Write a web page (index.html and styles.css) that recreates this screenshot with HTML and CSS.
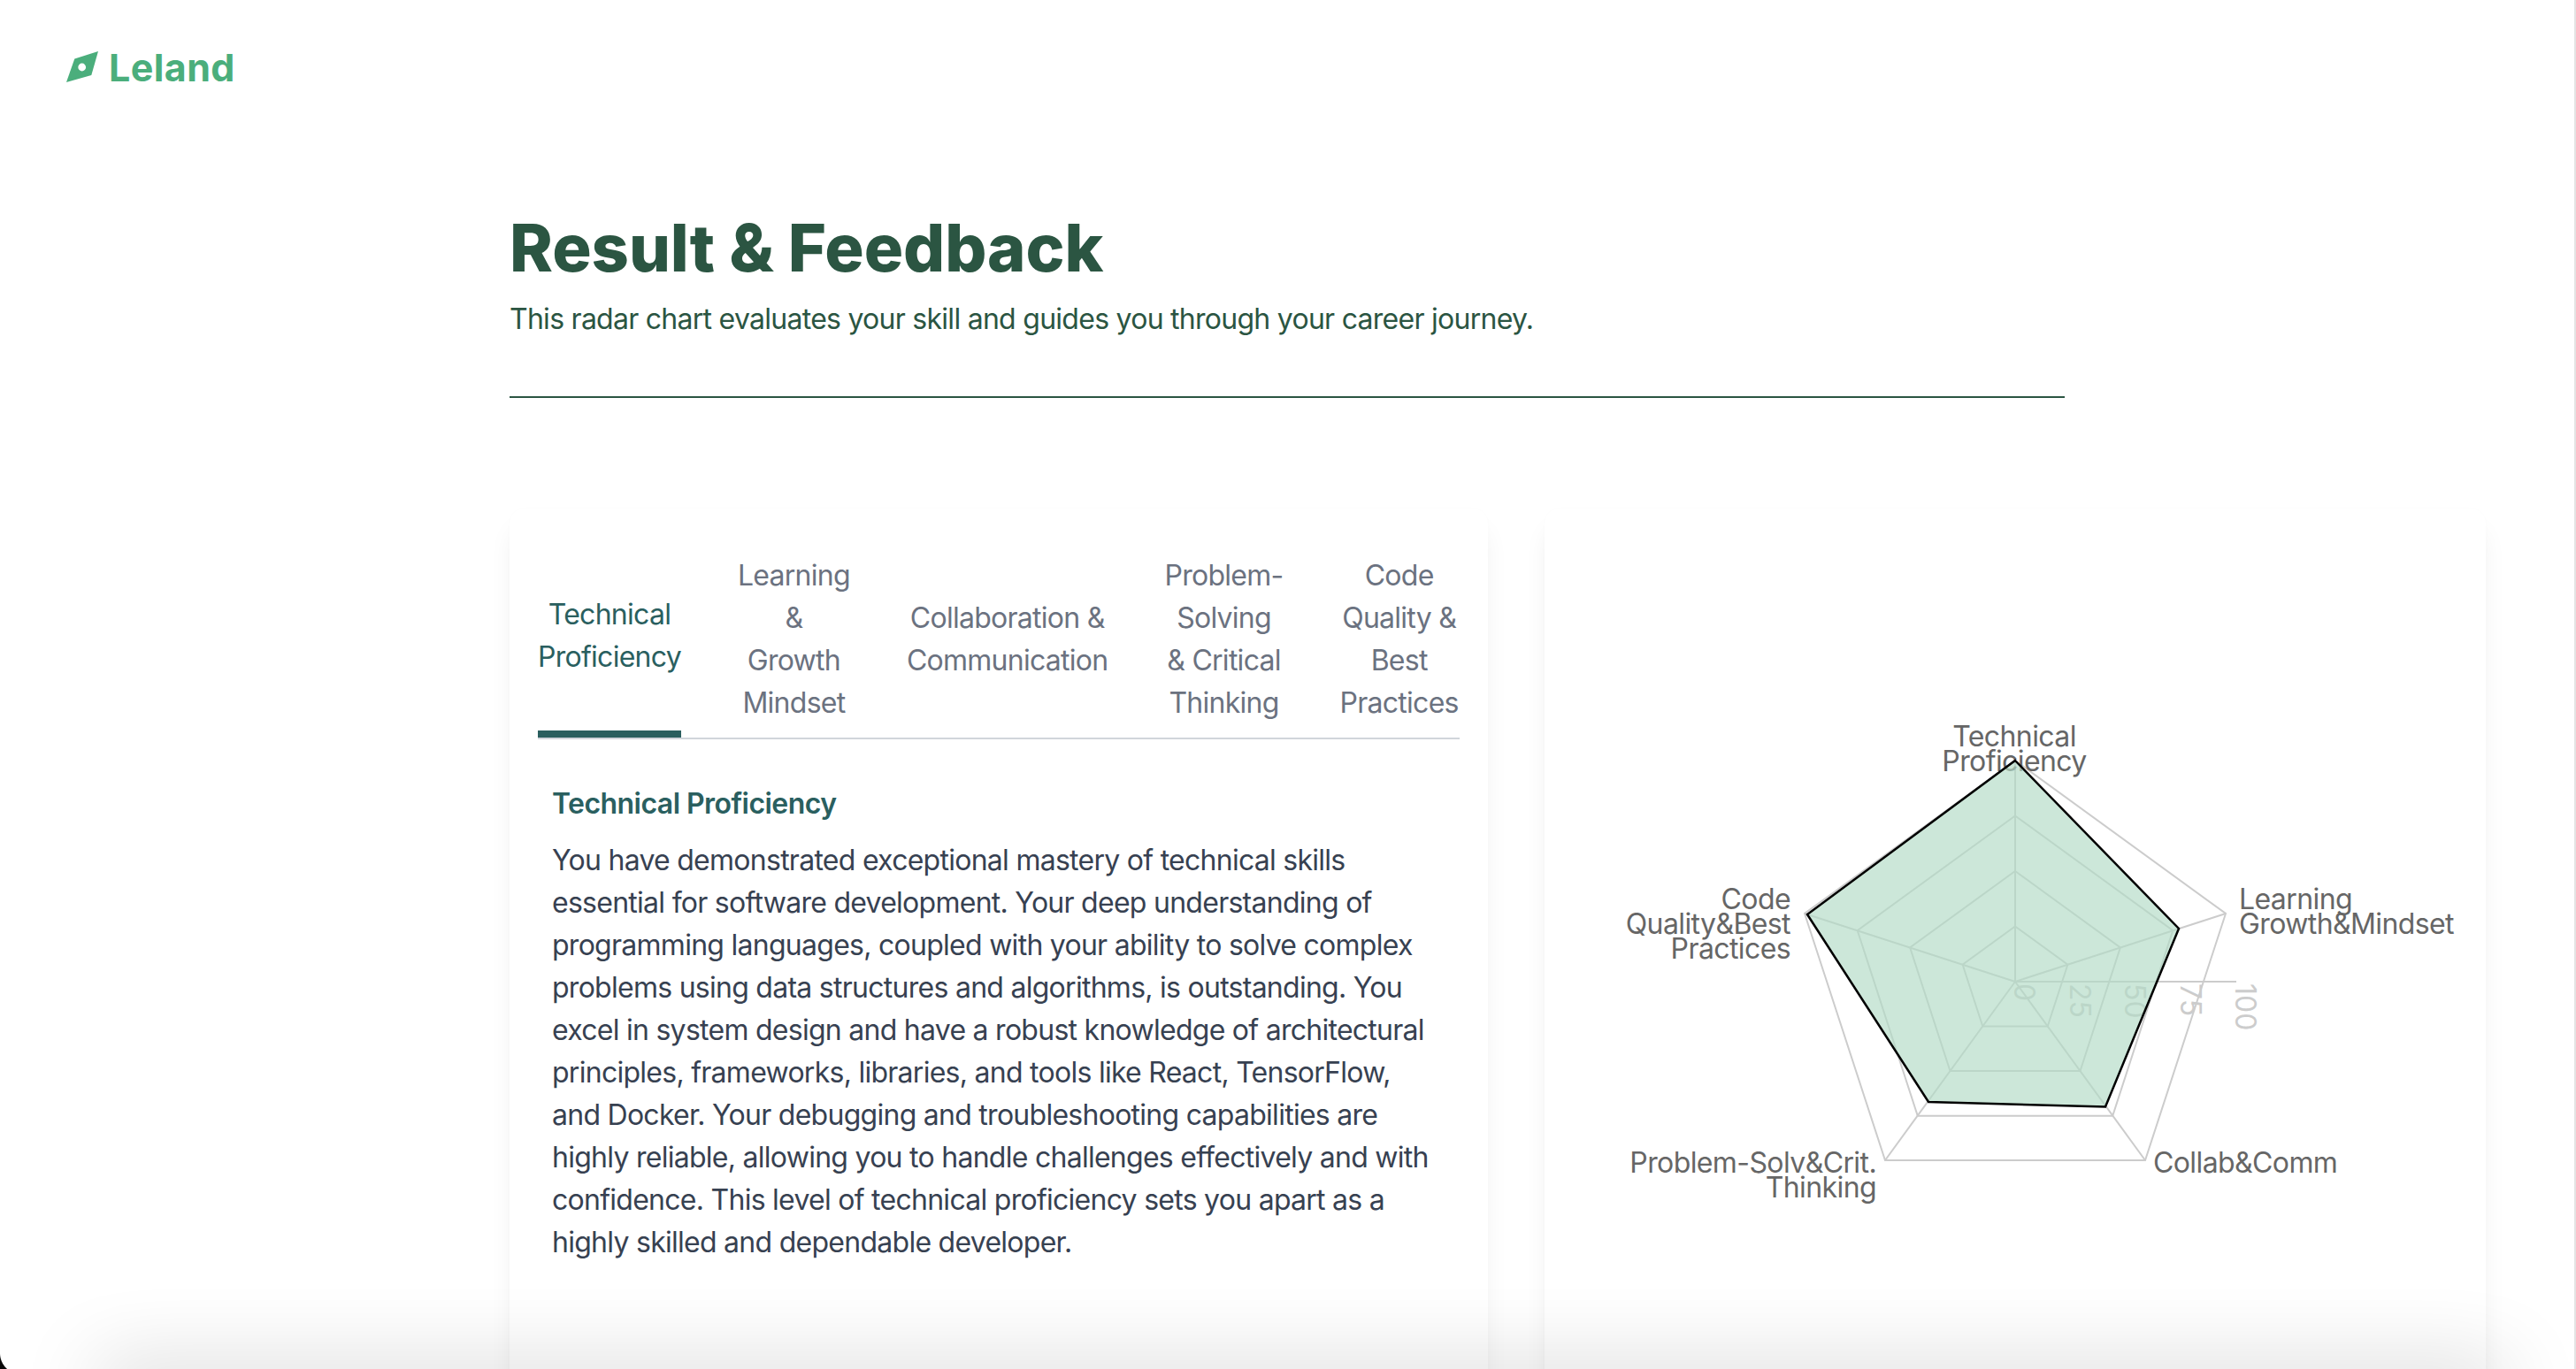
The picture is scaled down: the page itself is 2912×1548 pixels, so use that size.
FILE: index.html
```html
<!DOCTYPE html>
<html lang="en">
<head>
    <meta charset="UTF-8">
    <title>Result &amp; Feedback</title>
    <link rel="stylesheet" href="styles.css">
</head>
<body>
    <header class="topbar">
        <svg class="logo-mark" viewBox="0 0 36 36">
            <path d="M36 0 9.3 8.5 0 35l28.3-8z" fill="#4bae7c"/>
            <circle cx="17.7" cy="18" r="4.4" fill="#fff"/>
        </svg>
        <span class="logo-text">Leland</span>
    </header>

    <main class="content">
        <section class="intro">
            <h1>Result &amp; Feedback</h1>
            <p>This radar chart evaluates your skill and guides you through your career journey.</p>
        </section>

        <section class="cards">
            <div class="card">
                <div class="tabs">
                    <div class="tab active">Technical<br>Proficiency</div>
                    <div class="tab">Learning<br>&amp;<br>Growth<br>Mindset</div>
                    <div class="tab">Collaboration &amp;<br>Communication</div>
                    <div class="tab">Problem-<br>Solving<br>&amp; Critical<br>Thinking</div>
                    <div class="tab">Code<br>Quality &amp;<br>Best<br>Practices</div>
                </div>
                <div class="panel">
                    <h3>Technical Proficiency</h3>
                    <p>You have demonstrated exceptional mastery of technical skills essential for software development. Your deep understanding of programming languages, coupled with your ability to solve complex problems using data structures and algorithms, is outstanding. You excel in system design and have a robust knowledge of architectural principles, frameworks, libraries, and tools like React, TensorFlow, and Docker. Your debugging and troubleshooting capabilities are highly reliable, allowing you to handle challenges effectively and with confidence. This level of technical proficiency sets you apart as a highly skilled and dependable developer.</p>
                </div>
            </div>

            <div class="card chart-card">
                <svg class="radar" viewBox="0 0 1064 973">
                    <g class="grid">
                        <polygon points="532,472.5 591.4,515.7 568.7,585.6 495.3,585.6 472.6,515.7"/>
                        <polygon points="532,410 650.9,496.4 605.5,636.1 458.5,636.1 413.1,496.4"/>
                        <polygon points="532,347.5 710.3,477.1 642.2,686.7 421.8,686.7 353.7,477.1"/>
                        <polygon points="532,285 770,458 679,737 385,737 294,458"/>
                        <line x1="532" y1="535" x2="532" y2="285"/>
                        <line x1="532" y1="535" x2="770" y2="458"/>
                        <line x1="532" y1="535" x2="679" y2="737"/>
                        <line x1="532" y1="535" x2="385" y2="737"/>
                        <line x1="532" y1="535" x2="294" y2="458"/>
                        <line x1="532" y1="535" x2="782" y2="535"/>
                    </g>
                    <g class="ticks">
                        <text transform="rotate(90 531 537)" x="531" y="537">0</text>
                        <text transform="rotate(90 593.5 537)" x="593.5" y="537">25</text>
                        <text transform="rotate(90 656 537)" x="656" y="537">50</text>
                        <text transform="rotate(90 718.5 537)" x="718.5" y="537">75</text>
                        <text transform="rotate(90 781 537)" x="781" y="537">100</text>
                    </g>
                    <g class="labels">
                        <text x="531" y="268.5" text-anchor="middle">Technical</text>
                        <text x="531" y="296.5" text-anchor="middle">Proficiency</text>
                        <text x="785" y="453">Learning</text>
                        <text x="785" y="481">Growth&amp;Mindset</text>
                        <text x="688" y="751">Collab&amp;Comm</text>
                        <text x="375" y="751" text-anchor="end">Problem-Solv&amp;Crit.</text>
                        <text x="375" y="779" text-anchor="end">Thinking</text>
                        <text x="278" y="453" text-anchor="end">Code</text>
                        <text x="278" y="481" text-anchor="end">Quality&amp;Best</text>
                        <text x="278" y="509" text-anchor="end">Practices</text>
                    </g>
                    <polygon class="score" points="532,285 717,475 634,676.5 434,671 297,459"/>
                </svg>
            </div>
        </section>
    </main>

    <div class="window-shade"></div>
    <div class="window-edge"></div>
    <div class="window-corner"></div>
</body>
</html>
```

FILE: styles.css
```css
* {
    box-sizing: border-box;
}
html, body {
    height: 100%;
}
body {
    margin: 0;
    overflow: hidden;
    background-color: #fff;
    font-family: Inter, "Liberation Sans", sans-serif;
    font-size: 32px;
    line-height: 48px;
    letter-spacing: -0.73px;
}
.topbar {
    display: flex;
    align-items: center;
    gap: 12px;
    padding: 58px 0 0 75px;
}
.logo-mark {
    width: 36px;
    height: 36px;
}
.logo-text {
    color: #4bae7c;
    font-size: 43px;
    font-weight: 700;
    line-height: 36px;
    letter-spacing: 0.4px;
}
.content {
    width: 2234px;
    margin-left: 576px;
    padding-top: 146px;
}
.intro {
    width: 1758px;
    padding-bottom: 63px;
    border-bottom: 2px solid #2b5542;
    color: #2b5542;
}
h1 {
    margin: 0 0 17px;
    font-size: 74px;
    font-weight: 800;
    line-height: 80px;
    letter-spacing: -0.05px;
}
.intro p {
    margin: 0;
}
.cards {
    display: grid;
    grid-template-columns: 1106px 1064px;
    gap: 64px;
    margin-top: 125px;
}
.card {
    height: 1100px;
    padding: 52px 32px 0;
    background-color: #fff;
    border-radius: 18px;
    box-shadow: 0 20px 30px -6px rgba(0, 0, 0, 0.08), 0 0 4px rgba(0, 0, 0, 0.015);
}
.tabs {
    display: flex;
    gap: 64px;
    border-bottom: 2px solid #d1d5db;
    color: #6b7280;
    text-align: center;
}
.tab {
    display: flex;
    align-items: center;
    padding-bottom: 15px;
    white-space: nowrap;
}
.tab.active {
    border-bottom: 8px solid #2a5f5f;
    color: #2a5f5f;
}
.panel {
    padding: 49px 16px 0;
    color: #374151;
}
.panel h3 {
    margin: 0 0 16px;
    color: #2a5f5f;
    font-size: 32px;
    font-weight: 600;
    letter-spacing: -0.55px;
}
.panel p {
    max-width: 1000px;
    margin: 0;
}
.chart-card {
    padding: 0;
}
.radar {
    display: block;
    width: 1064px;
    height: 973px;
}
.grid polygon, .grid line {
    fill: none;
    stroke: #ccc;
    stroke-width: 2;
}
.ticks text {
    fill: #ccc;
    font-size: 32px;
    letter-spacing: 0;
}
.labels text {
    fill: #666;
    font-size: 32px;
    letter-spacing: -0.6px;
}
.score {
    fill: rgba(179, 219, 198, 0.67);
    stroke: #000;
    stroke-width: 2.5;
}
.window-shade {
    position: fixed;
    left: 110px;
    right: 80px;
    bottom: -40px;
    height: 40px;
    box-shadow: 0 0 90px rgba(0, 0, 0, 0.22);
    pointer-events: none;
}
.window-edge {
    position: fixed;
    top: 0;
    right: 0;
    bottom: 0;
    width: 2px;
    background-color: #e4e4e4;
}
.window-corner {
    position: fixed;
    left: 0;
    bottom: 0;
    width: 24px;
    height: 18px;
    background: radial-gradient(circle at 100% 0, transparent 23.5px, #0a0a0a 24.5px);
    pointer-events: none;
}
```
